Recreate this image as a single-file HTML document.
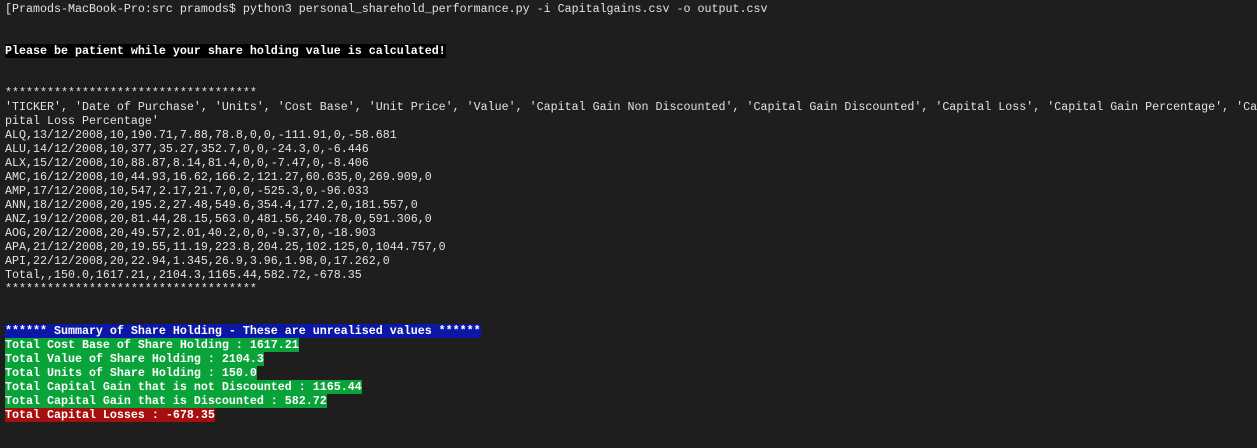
<!DOCTYPE html>
<html><head><meta charset="utf-8"><style>
html,body{margin:0;padding:0;background:#1e1e1e;width:1257px;height:448px;overflow:hidden}
pre{margin:0;padding:2px 0 0 5px;font-family:"Liberation Mono",monospace;font-size:11.67px;line-height:14px;color:#e2e2e2;white-space:pre}
.b{font-weight:bold;color:#fff}
.k{background:#000}
.bl{background:#0c17a8}
.g{background:#0aa33a}
.r{background:#a50f0f}
</style></head><body><pre>[Pramods-MacBook-Pro:src pramods$ python3 personal_sharehold_performance.py -i Capitalgains.csv -o output.csv


<span class="b k">Please be patient while your share holding value is calculated!</span>


************************************
'TICKER', 'Date of Purchase', 'Units', 'Cost Base', 'Unit Price', 'Value', 'Capital Gain Non Discounted', 'Capital Gain Discounted', 'Capital Loss', 'Capital Gain Percentage', 'Ca
pital Loss Percentage'
ALQ,13/12/2008,10,190.71,7.88,78.8,0,0,-111.91,0,-58.681
ALU,14/12/2008,10,377,35.27,352.7,0,0,-24.3,0,-6.446
ALX,15/12/2008,10,88.87,8.14,81.4,0,0,-7.47,0,-8.406
AMC,16/12/2008,10,44.93,16.62,166.2,121.27,60.635,0,269.909,0
AMP,17/12/2008,10,547,2.17,21.7,0,0,-525.3,0,-96.033
ANN,18/12/2008,20,195.2,27.48,549.6,354.4,177.2,0,181.557,0
ANZ,19/12/2008,20,81.44,28.15,563.0,481.56,240.78,0,591.306,0
AOG,20/12/2008,20,49.57,2.01,40.2,0,0,-9.37,0,-18.903
APA,21/12/2008,20,19.55,11.19,223.8,204.25,102.125,0,1044.757,0
API,22/12/2008,20,22.94,1.345,26.9,3.96,1.98,0,17.262,0
Total,,150.0,1617.21,,2104.3,1165.44,582.72,-678.35
************************************


<span class="b bl">****** Summary of Share Holding - These are unrealised values ******</span>
<span class="b g">Total Cost Base of Share Holding : 1617.21</span>
<span class="b g">Total Value of Share Holding : 2104.3</span>
<span class="b g">Total Units of Share Holding : 150.0</span>
<span class="b g">Total Capital Gain that is not Discounted : 1165.44</span>
<span class="b g">Total Capital Gain that is Discounted : 582.72</span>
<span class="b r">Total Capital Losses : -678.35</span></pre></body></html>
